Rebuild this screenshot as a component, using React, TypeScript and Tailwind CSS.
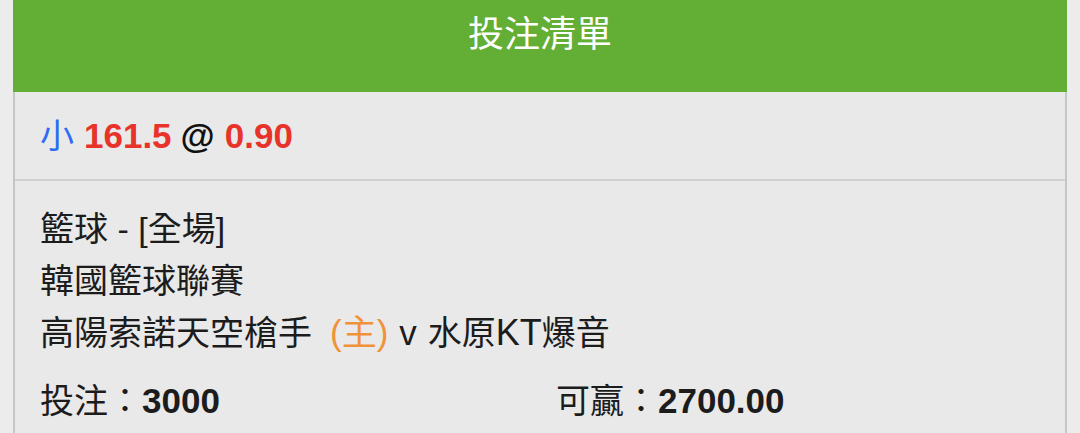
import React from "react";

const font = { fontFamily: '"Liberation Sans", "Noto Sans CJK TC", sans-serif' };

export default function App() {
  return (
    <div className="w-[1080px] h-[433px] overflow-hidden bg-[#ececec]" style={font}>
      <div className="mx-[13px] flex flex-col">
        <div className="h-[92px] bg-[#63ae34] flex items-center justify-center pb-[22px]">
          <span className="text-white text-[36px] leading-none">投注清單</span>
        </div>
        <div className="border-x-2 border-[#c6c6c6] bg-[#e9e9e9] pb-[40px]">
          <div className="h-[89px] border-b-2 border-[#d0d0d0] flex items-center pl-[25px] text-[34px] leading-none">
            <span className="text-[#2f6cf3]">小</span>
            <span className="ml-[10px] font-bold text-[#e8332b] text-[35px]">161.5</span>
            <span className="ml-[9px] font-bold text-[#111] text-[35px]">@</span>
            <span className="ml-[10px] font-bold text-[#e8332b] text-[35px]">0.90</span>
          </div>
          <div className="pl-[25px] pt-[23px] text-[34px] leading-[51.5px] text-[#1c1c1c]">
            <div>籃球 - [全場]</div>
            <div>韓國籃球聯賽</div>
            <div className="flex items-baseline">
              <span>高陽索諾天空槍手</span>
              <span className="ml-[18px] text-[#f0923a] text-[35px]">(主)</span>
              <span className="ml-[11px] text-[35px]">v</span>
              <span className="ml-[11px]">水原<span className="text-[36px]">KT</span>爆音</span>
            </div>
            <div className="mt-[15px] flex">
              <div className="w-[516px]">
                投注：<span className="font-bold text-[35px]">3000</span>
              </div>
              <div>
                可贏：<span className="font-bold text-[35px]">2700.00</span>
              </div>
            </div>
          </div>
        </div>
      </div>
    </div>
  );
}
